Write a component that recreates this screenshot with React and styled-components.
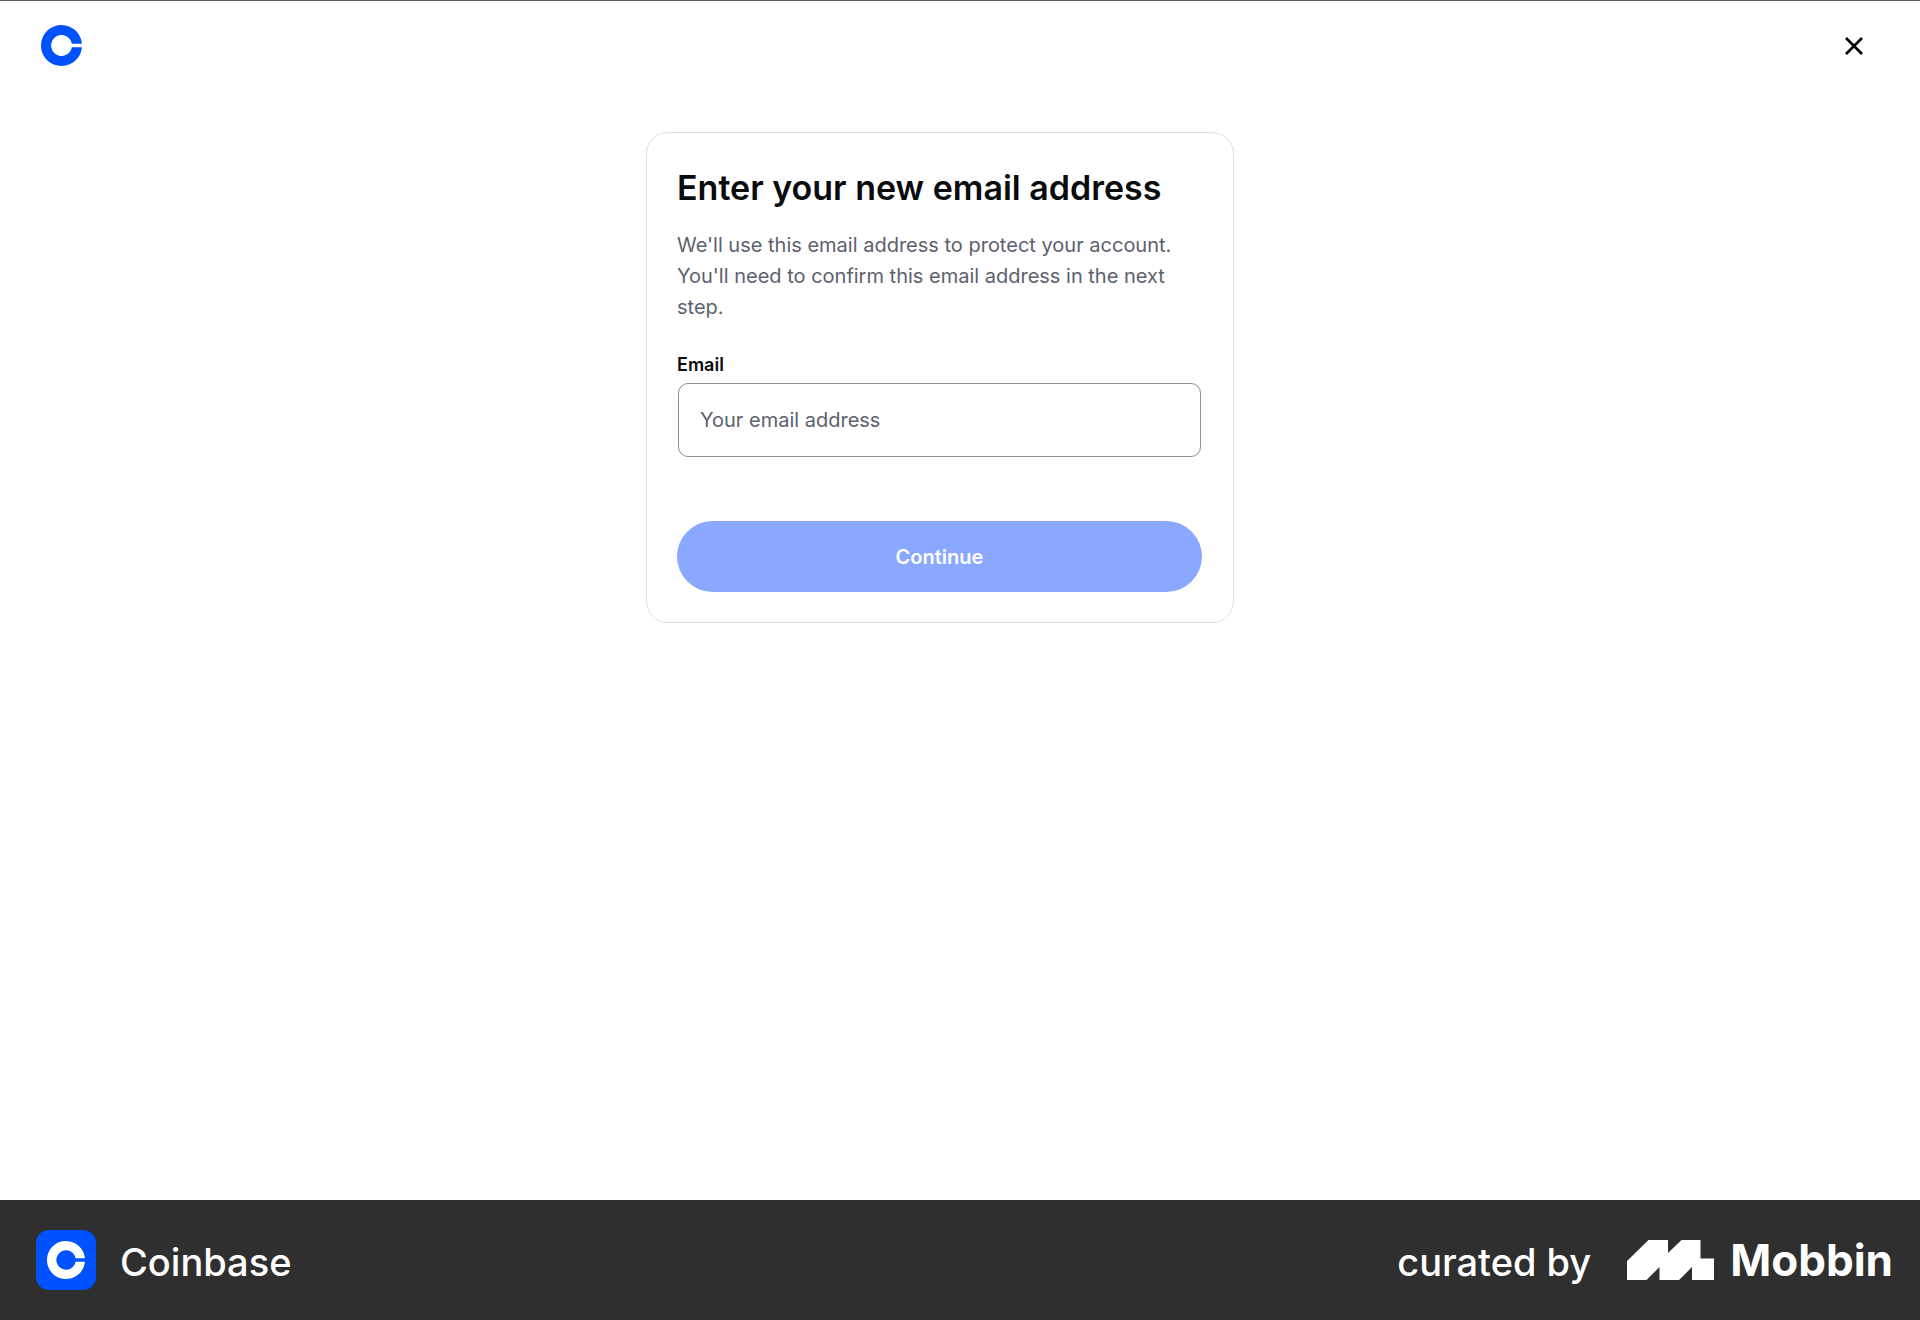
import React, { useId, useState } from "react";
import styled, { createGlobalStyle } from "styled-components";

const GlobalStyle = createGlobalStyle`
  *, *::before, *::after { box-sizing: border-box; }
  body {
    margin: 0;
    background: #ffffff;
    color: #0a0b0d;
    font-family: Inter, "Liberation Sans", sans-serif;
  }
`;

const Page = styled.div`
  display: flex;
  flex-direction: column;
  min-height: 100vh;
  border-top: 1px solid #5f5d62;
`;

const TopBar = styled.header`
  display: flex;
  align-items: center;
  justify-content: space-between;
  padding: 20px 47px 20px 37px;
`;

const HomeLink = styled.a`
  display: flex;
  padding: 4px;
`;

const IconButton = styled.button`
  display: flex;
  padding: 10px;
  border: 0;
  background: none;
  color: #000000;
  cursor: pointer;
`;

const Main = styled.main`
  display: flex;
  flex: 1;
  align-items: flex-start;
  justify-content: center;
  padding: 42px 40px 40px 0;
`;

const Card = styled.form`
  display: flex;
  flex-direction: column;
  width: 100%;
  max-width: 588px;
  padding: 30px 31px 30px 30px;
  border: 1px solid #dcdee2;
  border-radius: 22px;
`;

const Title = styled.h1`
  margin: 0 0 17px;
  color: #0a0b0d;
  font-size: 34px;
  font-weight: 600;
  line-height: 50px;
`;

const Lead = styled.p`
  margin: 0;
  color: #5b616e;
  font-size: 20px;
  line-height: 31px;
`;

const Field = styled.div`
  display: flex;
  flex-direction: column;
  gap: 6px;
  margin: 30px 0 64px;
`;

const Label = styled.label`
  font-size: 18px;
  font-weight: 600;
  line-height: 24px;
`;

const TextInput = styled.input`
  height: 74px;
  margin: 0 1px;
  padding: 0 21px;
  border: 1px solid #8a8f99;
  border-radius: 10px;
  background: #ffffff;
  color: #0a0b0d;
  font-family: inherit;
  font-size: 20px;

  &::placeholder {
    color: #5b616e;
    opacity: 1;
  }
`;

const SubmitButton = styled.button`
  height: 71px;
  border: 0;
  border-radius: 36px;
  background: #8aa8ff;
  color: #ffffff;
  font-family: inherit;
  font-size: 20px;
  font-weight: 600;
`;

const Footer = styled.footer`
  display: flex;
  align-items: center;
  justify-content: space-between;
  padding: 30px 27px 30px 36px;
  background: #2f2f2f;
  color: #ffffff;
`;

const FooterGroup = styled.div`
  display: flex;
  align-items: center;
  gap: ${(p) => p.$gap};
`;

const AppTile = styled.span`
  display: flex;
  align-items: center;
  justify-content: center;
  width: 60px;
  height: 60px;
  border-radius: 13px;
  background: #0052ff;
`;

const FooterText = styled.span`
  padding-top: 4px;
  font-size: 38px;
  font-weight: 500;
  line-height: 56px;
`;

const BrandText = styled.span`
  font-size: 44px;
  font-weight: 700;
  line-height: 60px;
`;

function CoinMark({ size, color, title }) {
  return (
    <svg width={size} height={size} viewBox="0 0 40 40" role="img" aria-label={title}>
      <path
        fill={color}
        d="M39.9 18.2A20 20 0 1 0 39.9 21.8H30.1A10.2 10.2 0 1 1 30.1 18.2Z"
      />
    </svg>
  );
}

function CloseIcon() {
  return (
    <svg width="18" height="18" viewBox="0 0 18 18" aria-hidden="true">
      <path d="M1 1L17 17M17 1L1 17" fill="none" stroke="currentColor" strokeWidth="2.6" />
    </svg>
  );
}

function MobbinMark() {
  return (
    <svg width="87" height="40" viewBox="0 0 87 40" aria-hidden="true">
      <path
        fill="#ffffff"
        d="M0 21L21.5 0H41V13L54.5 0H73.5V18.5H87V40H65V27L52 40H32.5V27L19.5 40H0Z"
      />
    </svg>
  );
}

export default function App() {
  const emailId = useId();
  const [email, setEmail] = useState("");

  return (
    <>
      <GlobalStyle />
      <Page>
        <TopBar>
          <HomeLink href="#">
            <CoinMark size={41} color="#0052ff" title="Coinbase home" />
          </HomeLink>
          <IconButton type="button" aria-label="Close">
            <CloseIcon />
          </IconButton>
        </TopBar>

        <Main>
          <Card onSubmit={(event) => event.preventDefault()}>
            <Title>Enter your new email address</Title>
            <Lead>
              We'll use this email address to protect your account. You'll need to
              confirm this email address in the next step.
            </Lead>
            <Field>
              <Label htmlFor={emailId}>Email</Label>
              <TextInput
                id={emailId}
                type="email"
                placeholder="Your email address"
                value={email}
                onChange={(event) => setEmail(event.target.value)}
              />
            </Field>
            <SubmitButton type="submit" disabled={!email}>
              Continue
            </SubmitButton>
          </Card>
        </Main>

        <Footer>
          <FooterGroup $gap="24px">
            <AppTile>
              <CoinMark size={38} color="#ffffff" title="Coinbase" />
            </AppTile>
            <FooterText>Coinbase</FooterText>
          </FooterGroup>
          <FooterGroup $gap="36px">
            <FooterText>curated by</FooterText>
            <FooterGroup $gap="16px">
              <MobbinMark />
              <BrandText>Mobbin</BrandText>
            </FooterGroup>
          </FooterGroup>
        </Footer>
      </Page>
    </>
  );
}
